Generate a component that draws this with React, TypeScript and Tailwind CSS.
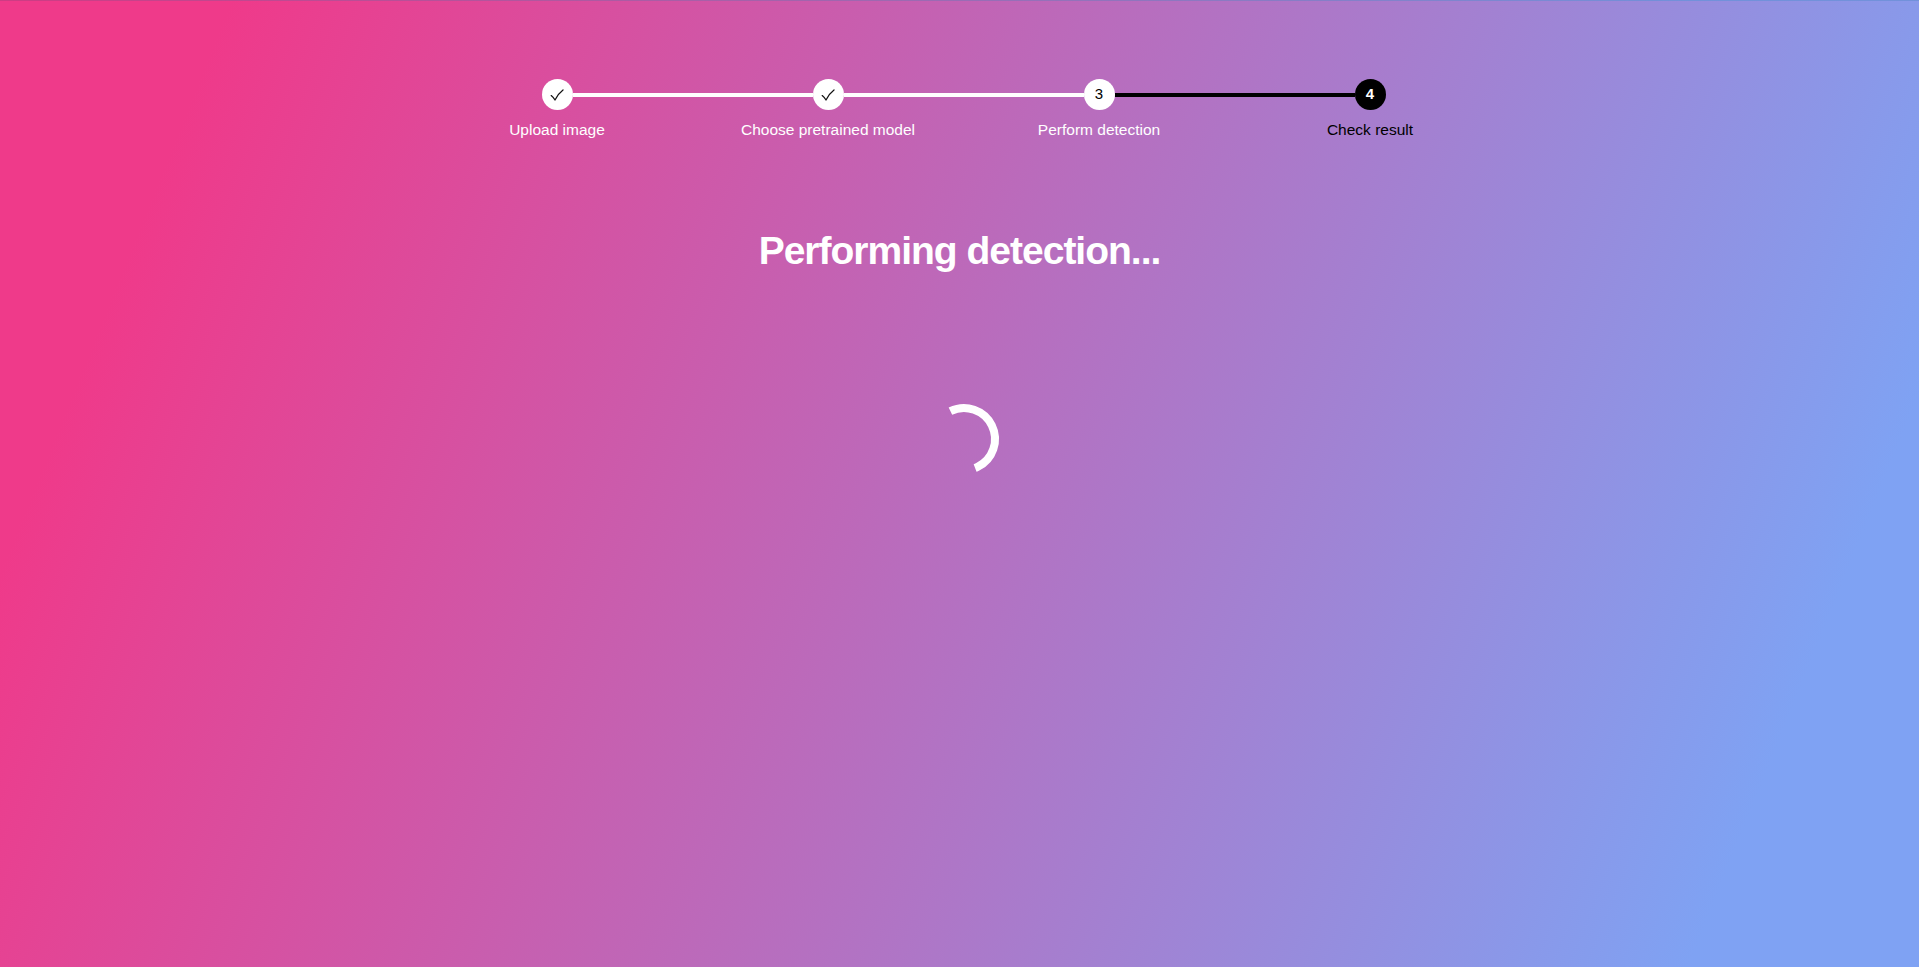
const steps = [
  { label: "Upload image", mark: "✓", state: "done" },
  { label: "Choose pretrained model", mark: "✓", state: "done" },
  { label: "Perform detection", mark: "3", state: "current" },
  { label: "Check result", mark: "4", state: "next" },
];

const Check = () => (
  <svg width="14" height="12" viewBox="0 0 14 12" fill="none" aria-label="✓">
    <path d="M1.2 6.6 Q3.2 8.2 5 11 Q8.2 4.6 13 1" stroke="#111" strokeWidth="1.3" strokeLinecap="round" strokeLinejoin="round" />
  </svg>
);

const Spinner = () => {
  // half arc, from just left of top round to lower left
  return (
    <svg width="72" height="72" viewBox="0 0 72 72" className="rotate-[-26deg]">
      <circle
        cx="36"
        cy="36"
        r="31"
        fill="none"
        stroke="white"
        strokeWidth="8"
        strokeDasharray="100 200"
        transform="rotate(-90 36 36)"
      />
    </svg>
  );
};

export default function App() {
  return (
    <div
      className="min-h-screen w-full border-t border-black/10 bg-[linear-gradient(112deg,#ef3a8a_10%,#7fa2f3_90%)]"
      style={{ fontFamily: '"Liberation Sans", Arial, sans-serif' }}
    >
      {/* Stepper */}
      <div className="flex flex-col items-center pt-[78px] pl-2">
        <div className="flex items-center">
          {steps.map((s, i) => (
            <div key={s.label} className="flex items-center">
              <div
                className={
                  s.state === "next"
                    ? "flex h-[31px] w-[31px] items-center justify-center rounded-full bg-black text-[15px] font-bold text-white"
                    : "flex h-[31px] w-[31px] items-center justify-center rounded-full bg-white text-[15px] text-black"
                }
              >
                {s.mark === "✓" ? <Check /> : s.mark}
              </div>
              {i < steps.length - 1 && (
                <div className={i < 2 ? "h-1 w-[240px] bg-white" : "h-1 w-[240px] bg-black"} />
              )}
            </div>
          ))}
        </div>
        <div className="mt-[10px] flex">
          {steps.map((s) => (
            <div
              key={s.label}
              className={
                s.state === "next"
                  ? "w-[271px] text-center text-[15.5px] leading-5 text-black"
                  : "w-[271px] text-center text-[15.5px] leading-5 text-white"
              }
            >
              {s.label}
            </div>
          ))}
        </div>
      </div>

      {/* Body */}
      <div className="flex flex-col items-center">
        <h1 className="mt-[87px] text-[39px] font-bold leading-[48px] tracking-[-1px] text-white">
          Performing detection...
        </h1>
        <div className="mt-[128px] ml-2">
          <Spinner />
        </div>
      </div>
    </div>
  );
}
